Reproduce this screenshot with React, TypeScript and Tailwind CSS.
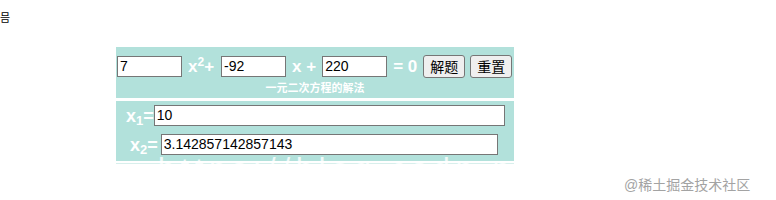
import React from 'react';

const teal = 'bg-[#b2e1db]';
const inputCls =
  'h-[21px] w-[65px] border border-[#767676] bg-white px-[2px] text-[14px] font-normal text-black outline-none';
const btnCls =
  'h-[23px] rounded-[3px] border border-[#767676] bg-[#efefef] px-[6px] text-[14px] font-normal leading-none text-black';

export default function App() {
  return (
    <div className="relative h-[200px] w-[776px] overflow-hidden bg-white font-['Liberation_Sans','Noto_Sans_CJK_SC',sans-serif]">
      <div className="pt-[11px] text-[11px] leading-[14px] text-black">믐</div>

      <div className="ml-[116px] mt-[22px] w-[398px]">
        {/* equation row */}
        <div className={`${teal} h-[51px] pt-[8px]`}>
          <div className="flex items-center text-[17px] font-bold text-white">
            <input className={`${inputCls} ml-[1px]`} defaultValue="7" />
            <span className="ml-[6px] leading-none">
              x<sup className="text-[12px]">2</sup>+
            </span>
            <input className={`${inputCls} ml-[7px]`} defaultValue="-92" />
            <span className="ml-[6px] leading-none">x +</span>
            <input className={`${inputCls} ml-[6px]`} defaultValue="220" />
            <span className="ml-[6px] leading-none">= 0</span>
            <button className={`${btnCls} ml-[6px]`}>解题</button>
            <button className={`${btnCls} ml-[5px]`}>重置</button>
          </div>
          <div className="mt-[3px] text-center text-[11px] font-bold leading-[14px] text-white">
            一元二次方程的解法
          </div>
        </div>

        <div className="h-[3px] bg-white" />

        {/* result rows */}
        <div className={`${teal} flex h-[60px] flex-col gap-[8px] pt-[4px]`}>
          <div className="flex items-center pl-[10px] text-[18px] font-bold text-white">
            <span className="leading-none">
              x<sub className="text-[13px]">1</sub>=
            </span>
            <input className={`${inputCls} ml-[0px] w-[351px]`} defaultValue="10" />
          </div>
          <div className="flex items-center pl-[14px] text-[18px] font-bold text-white">
            <span className="leading-none">
              x<sub className="text-[13px]">2</sub>=
            </span>
            <input
              className={`${inputCls} ml-[3px] h-[20px] w-[337px]`}
              defaultValue="3.142857142857143"
            />
          </div>
        </div>
        <div className="h-[2px] bg-white" />
        <div className="h-[1px] bg-[#d8efec]" />
      </div>

      {/* watermarks */}
      <div className="pointer-events-none absolute left-[158px] top-[146px] text-[30px] tracking-[6px] text-white/80">
        https://blog.csdn.net
      </div>
      <div className="pointer-events-none absolute left-[624px] top-[175px] text-[14px] text-[#a3a3a3]">
        @稀土掘金技术社区
      </div>
    </div>
  );
}
